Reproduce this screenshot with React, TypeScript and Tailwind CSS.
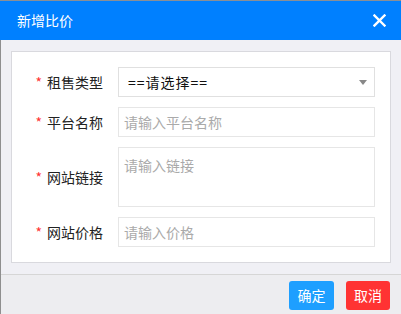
const fields = [
  { label: '平台名称', placeholder: '请输入平台名称' },
];

function Label({ text }: { text: string }) {
  return (
    <div className="flex w-[106px] shrink-0 items-center justify-end pr-[15px]">
      <span className="mr-[5px] text-[14px] text-[#ff3333]">*</span>
      <span className="text-[14px] text-[#222]">{text}</span>
    </div>
  );
}

export default function App() {
  return (
    <div
      className="flex h-[314px] w-[401px] flex-col overflow-hidden border-t border-[#8a8f96] bg-[#f0f0f5]"
      style={{ fontFamily: '"Noto Sans CJK SC", "Noto Sans", sans-serif' }}
    >
      <div className="flex h-[39px] shrink-0 items-center justify-between bg-[#0080ff] pl-[17px] pr-[15px]">
        <span className="text-[14px] text-white">新增比价</span>
        <svg width="13" height="13" viewBox="0 0 13 13" className="text-white">
          <path d="M1.5 1.5 L11.5 11.5 M11.5 1.5 L1.5 11.5" stroke="currentColor" strokeWidth="2.4" strokeLinecap="square" />
        </svg>
      </div>
      <div className="flex flex-1 flex-col border-l border-[#8f8f8f]">
        <div className="px-[10px] pb-[11px] pt-[11px]">
          <div className="flex flex-col gap-[10px] border border-[#d9d9de] bg-white pb-[15px] pl-0 pr-[15px] pt-[15px]">
            <div className="flex items-center">
              <Label text="租售类型" />
              <div className="relative flex h-[30px] flex-1 items-center border border-[#e0e0e0] pl-[9px]">
                <span className="text-[14px] tracking-[1px] text-[#111]">==请选择==</span>
                <div className="absolute right-[7px] top-[12px] h-0 w-0 border-x-[4px] border-t-[5px] border-x-transparent border-t-[#888]" />
              </div>
            </div>
            {fields.map((f) => (
              <div key={f.label} className="flex items-center">
                <Label text={f.label} />
                <div className="flex h-[30px] flex-1 items-center border border-[#e6e6e6] pl-[5px]">
                  <span className="text-[14px] text-[#aaa]">{f.placeholder}</span>
                </div>
              </div>
            ))}
            <div className="flex items-center">
              <Label text="网站链接" />
              <div className="h-[60px] flex-1 border border-[#e6e6e6] pl-[5px] pt-[4px]">
                <span className="text-[14px] text-[#aaa]">请输入链接</span>
              </div>
            </div>
            <div className="flex items-center">
              <Label text="网站价格" />
              <div className="flex h-[30px] flex-1 items-center border border-[#e6e6e6] pl-[5px]">
                <span className="text-[14px] text-[#aaa]">请输入价格</span>
              </div>
            </div>
          </div>
        </div>
        <div className="flex flex-1 items-start justify-end gap-[12px] border-t border-[#d6d6d6] bg-[#ededf0] pr-[11px] pt-[6px]">
          <button className="h-[29px] w-[45px] rounded-[3px] bg-[#1e9fff] text-[14px] text-white">确定</button>
          <button className="h-[29px] w-[44px] rounded-[3px] bg-[#ff3333] text-[14px] text-white">取消</button>
        </div>
      </div>
    </div>
  );
}
